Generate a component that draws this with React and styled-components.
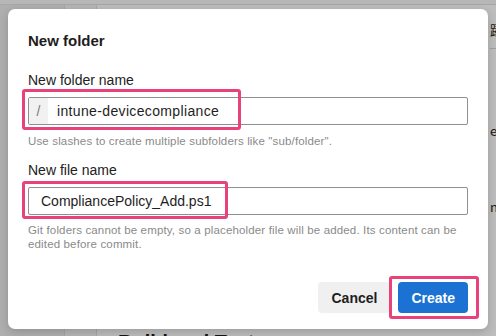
import React from "react"
import styled, { createGlobalStyle } from "styled-components"

const GlobalStyle = createGlobalStyle`
  html, body {
    margin: 0;
    padding: 0;
    background: #bdbdbd;
  }
  body {
    font-family: "Liberation Sans", Helvetica, Arial, sans-serif;
    -webkit-font-smoothing: antialiased;
  }
`

const Page = styled.div`
  position: relative;
  width: 496px;
  height: 336px;
  overflow: hidden;
`

const Shell = styled.div`
  display: grid;
  grid-template-columns: 65px 32px 1fr 8px;
  grid-template-rows: 5px 1fr;
  width: 100%;
  height: 100%;
  background: #ffffff;
`

const TopBar = styled.div`
  grid-column: 1 / -1;
  background: #f7f7f7;
  border-bottom: 1px solid #e2e2e2;
`

const Rail = styled.div`
  background: ${(p) => (p.$dark ? "#ededed" : "#f6f6f6")};
  border-right: 1px solid #e0e0e0;
`

const Main = styled.main`
  display: flex;
  flex-direction: column;
  justify-content: flex-end;
  padding: 0 0 0 21px;
`

const BuildHeading = styled.h2`
  margin: 0 0 -18px;
  font-size: 20px;
  line-height: 24px;
  font-weight: 700;
  color: #1a1a1a;
`

const Edge = styled.div`
  display: flex;
  flex-direction: column;
  overflow: hidden;
  padding-top: 17px;
  font-size: 14px;
  color: #222;
`

const EdgeGlyph = styled.span`
  display: block;
  height: ${(p) => p.$h}px;
  line-height: 16px;
  margin-left: 2px;
  font-family: "Noto Sans CJK JP", "Liberation Sans", sans-serif;
  font-size: 13px;
  border-bottom: ${(p) => (p.$line ? "1px solid #d8d8d8" : "0")};
`

const Backdrop = styled.div`
  position: absolute;
  inset: 0;
  background: rgba(0, 0, 0, 0.26);
`

const Dialog = styled.div`
  position: absolute;
  top: 9px;
  left: 8px;
  width: 480px;
  height: 320px;
  box-sizing: border-box;
  display: flex;
  flex-direction: column;
  padding: 31px 20px 16px;
  background: #ffffff;
  border-radius: 7px;
  box-shadow: 0 3px 10px rgba(0, 0, 0, 0.18);
  color: #1d1d1d;
`

const Title = styled.h1`
  margin: -9px 0 0;
  font-size: 15px;
  line-height: 20px;
  font-weight: 700;
`

const Field = styled.div`
  display: flex;
  flex-direction: column;
  margin-top: ${(p) => p.$top}px;
`

const Label = styled.label`
  font-size: 14px;
  line-height: 20px;
  color: #222;
  margin-bottom: 7px;
`

const Marked = styled.div`
  position: relative;
`

const Mark = styled.span`
  position: absolute;
  top: ${(p) => p.$t}px;
  left: ${(p) => p.$l}px;
  width: ${(p) => p.$w}px;
  height: ${(p) => p.$h}px;
  box-sizing: border-box;
  border: 3px solid #e9427b;
  border-radius: 3px;
  pointer-events: none;
`

const InputBox = styled.div`
  display: flex;
  align-items: stretch;
  height: 28px;
  box-sizing: border-box;
  border: 1px solid #8f8f8f;
  border-radius: 2px;
  background: #fff;
`

const Prefix = styled.span`
  display: flex;
  align-items: center;
  justify-content: center;
  width: 19px;
  background: #f1f1f1;
  color: #7a7a7a;
  font-size: 14px;
`

const Value = styled.span`
  display: flex;
  align-items: center;
  padding-left: ${(p) => p.$pad}px;
  font-size: 14px;
  letter-spacing: ${(p) => p.$track || 0}px;
  color: #1e1e1e;
`

const Hint = styled.p`
  margin: ${(p) => p.$top}px 0 0;
  font-size: 11.5px;
  line-height: 13.4px;
  color: #8a8a8a;
  letter-spacing: 0.15px;
`

const Footer = styled.div`
  display: flex;
  justify-content: flex-end;
  gap: 8px;
  margin-top: auto;
`

const Button = styled.button`
  height: 31px;
  padding: 0 13px;
  border: 0;
  border-radius: 4px;
  font-family: inherit;
  font-size: 14px;
  font-weight: 700;
  background: ${(p) => (p.$primary ? "#1b72d2" : "#f0f0f0")};
  color: ${(p) => (p.$primary ? "#ffffff" : "#1e1e1e")};
`

export default function App() {
  return (
    <>
      <GlobalStyle />
      <Page>
        <Shell>
          <TopBar />
          <Rail $dark />
          <Rail />
          <Main>
            <BuildHeading>Build and Test</BuildHeading>
          </Main>
          <Edge>
            <EdgeGlyph $h={26} $line>躍</EdgeGlyph>
            <EdgeGlyph $h={74}></EdgeGlyph>
            <EdgeGlyph $h={76}>e</EdgeGlyph>
            <EdgeGlyph $h={20}>n</EdgeGlyph>
          </Edge>
        </Shell>
        <Backdrop />
        <Dialog>
          <Title>New folder</Title>
          <Field $top={19}>
            <Label>New folder name</Label>
            <Marked>
              <InputBox>
                <Prefix>/</Prefix>
                <Value $pad={9} $track={0.35}>intune-devicecompliance</Value>
              </InputBox>
              <Mark $t={-8} $l={-6} $w={219} $h={41} />
            </Marked>
            <Hint $top={10}>Use slashes to create multiple subfolders like "sub/folder".</Hint>
          </Field>
          <Field $top={12}>
            <Label>New file name</Label>
            <Marked>
              <InputBox>
                <Value $pad={12}>CompliancePolicy_Add.ps1</Value>
              </InputBox>
              <Mark $t={-6} $l={-6} $w={206} $h={38} />
            </Marked>
            <Hint $top={9}>
              Git folders cannot be empty, so a placeholder file will be added. Its content can be
              edited before commit.
            </Hint>
          </Field>
          <Footer>
            <Button>Cancel</Button>
            <Marked>
              <Button $primary>Create</Button>
              <Mark $t={-6} $l={-9} $w={90} $h={43} />
            </Marked>
          </Footer>
        </Dialog>
      </Page>
    </>
  )
}
